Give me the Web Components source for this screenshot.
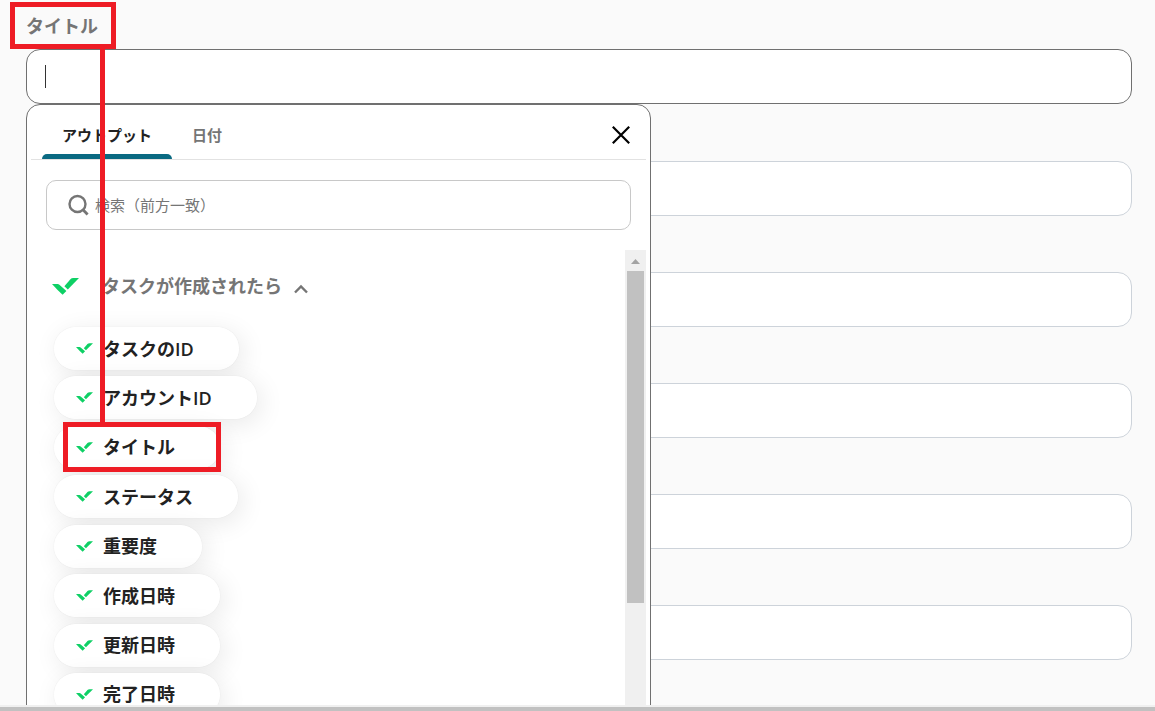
<!DOCTYPE html>
<html lang="ja">
<head>
<meta charset="utf-8">
<meta name="viewport" content="width=device-width, initial-scale=1">
<title>タスク設定</title>
<style>
html, body { margin: 0; height: 100%; }
body { font-family: "Open Sans", "Noto Sans CJK JP", sans-serif; color: #222; background: #fafafa; }
</style>
</head>
<body>
<task-form></task-form>
<script>
class Base extends HTMLElement {
  constructor() {
    super();
    const root = this.attachShadow({ mode: "open" });
    root.innerHTML = "<style>*{box-sizing:border-box}button,input{font:inherit;color:inherit;border:0;padding:0;margin:0;background:none;outline:0}</style>" + this.constructor.markup;
  }
}

/* Green two-part tick of the connected service */
class ServiceMark extends Base {
  static markup = `
  <style>
    :host { display: block; flex: none; width: 27px; height: 17px; }
    :host([small]) { width: 17px; height: 11px; }
    svg { display: block; width: 100%; height: 100%; }
  </style>
  <svg viewBox="0 0 27 17" fill="#0ed065" aria-hidden="true">
    <path d="M0 6H5.6Q6.6 6 7.4 6.8L14.4 13L10.6 16.8Q5.5 12.2 0 6Z"/>
    <path d="M12.4 8.2L18.2 1.4Q19.5 0 21.4 0H27L15.8 11.4Z"/>
  </svg>`;
}
customElements.define("service-mark", ServiceMark);

class OutputChip extends Base {
  static markup = `
  <style>
    :host { display: block; border-radius: 22px; box-shadow: 0 0 1px rgba(0,0,0,.15), 4px 5px 26px rgba(0,0,0,.09); }
    button { display: flex; align-items: center; gap: 10px; height: 43px; padding: 0 45px 0 22px;
      border-radius: 22px; background: #fff; font-size: 18px; font-weight: 600; line-height: 24px; white-space: nowrap; }
  </style>
  <button type="button"><service-mark small></service-mark><span><slot></slot></span></button>`;
}
customElements.define("output-chip", OutputChip);

class ScrollRail extends Base {
  static markup = `
  <style>
    :host { display: block; flex: none; width: 21px; background: #f0f0f0; }
    svg { display: block; width: 21px; height: 21px; }
    div { height: 332px; margin: 0 2px; background: #c1c1c1; }
  </style>
  <svg aria-hidden="true"><path d="M6 14L10.5 9L15 14Z" fill="#a3a3a3"/></svg><div></div>`;
}
customElements.define("scroll-rail", ScrollRail);

class OutputPicker extends Base {
  static markup = `
  <style>
    :host { display: block; background: #fff; border: 1px solid #707070; border-radius: 14px; padding: 0 4px; }
    header { display: flex; align-items: stretch; height: 55px; padding: 0 10px 0 11px; border-bottom: 1px solid #e2e2e2; }
    .tab { position: relative; height: 54px; padding: 5px 20px 0; font-size: 15px; font-weight: 700; line-height: 24px; color: #757575; }
    .tab[aria-selected="true"] { color: #222; width: 130px; }
    .tab[aria-selected="true"]::after { content: ""; position: absolute; left: 0; right: 0; bottom: 0; height: 5px; background: #0a6a82; border-radius: 5px 5px 0 0; }
    .close { margin-left: auto; align-self: center; width: 30px; height: 30px; display: grid; place-items: center; padding-top: 6px; }
    .search { display: flex; align-items: center; gap: 4px; height: 50px; margin: 20px 15px; padding: 0 20px; border: 1px solid #c8c8c8; border-radius: 10px; }
    .search svg { flex: none; }
    .search input { flex: 1; min-width: 0; height: 30px; font-size: 15px; line-height: 24px; }
    .search input::placeholder { color: #757575; opacity: 1; }
    .body { display: flex; align-items: stretch; }
    .list { flex: 1; min-width: 0; padding: 20px 21px; }
    .group { display: flex; align-items: center; height: 32px; font-size: 18px; font-weight: 600; line-height: 24px; color: #757575; white-space: nowrap; }
    .group span { margin: 0 11px 0 23px; }
    .group .chev { margin-top: 6px; }
    .chips { display: flex; flex-direction: column; align-items: flex-start; justify-content: space-between; min-height: 389px; margin-top: 25px; padding-left: 2px; }
  </style>
  <header role="tablist">
    <button class="tab" type="button" role="tab" aria-selected="true">アウトプット</button>
    <button class="tab" type="button" role="tab" aria-selected="false">日付</button>
    <button class="close" type="button" aria-label="閉じる">
      <svg width="18" height="18" fill="none" stroke="#000" stroke-width="2.2"><path d="M.8 .8L17.2 17.2M17.2 .8L.8 17.2"/></svg>
    </button>
  </header>
  <div class="search">
    <svg width="24" height="24" fill="none" stroke="#757575" stroke-width="2.4" aria-hidden="true"><circle cx="10.5" cy="11" r="8"/><path d="M16 16.8L20.6 21.4" stroke-width="2.8"/></svg>
    <input type="text" aria-label="検索" placeholder="検索（前方一致）">
  </div>
  <div class="body">
    <div class="list">
      <button class="group" type="button" aria-expanded="true">
        <service-mark></service-mark><span>タスクが作成されたら</span>
        <svg class="chev" width="16" height="10" fill="none" stroke="#757575" stroke-width="2.4" aria-hidden="true"><path d="M2 8.5L8 2.5L14 8.5"/></svg>
      </button>
      <div class="chips">
        <output-chip>タスクのID</output-chip>
        <output-chip>アカウントID</output-chip>
        <output-chip>タイトル</output-chip>
        <output-chip>ステータス</output-chip>
        <output-chip>重要度</output-chip>
        <output-chip>作成日時</output-chip>
        <output-chip>更新日時</output-chip>
        <output-chip>完了日時</output-chip>
      </div>
    </div>
    <scroll-rail></scroll-rail>
  </div>`;
}
customElements.define("output-picker", OutputPicker);

class FormField extends Base {
  static markup = `
  <style>
    :host { display: block; }
    .box { display: flex; align-items: center; height: 55px; padding: 0 18px; background: #fff; border: 1px solid #cdd3da; border-radius: 14px; }
    :host([active]) .box { border-color: #707070; }
    label { font-size: 18px; font-weight: 700; line-height: 24px; color: #757575; display: block; width: max-content; margin-bottom: 11px; }
    label[hidden] { display: none; }
    input { flex: 1; min-width: 0; height: 32px; font-size: 18px; }
    i { display: none; width: 1px; height: 23px; background: #333; }
    :host([active]) i { display: block; }
  </style>
  <label for="value" hidden></label>
  <div class="box"><i></i><input id="value" type="text"></div>`;
  connectedCallback() {
    const label = this.shadowRoot.querySelector("label");
    if (this.hasAttribute("label")) {
      label.textContent = this.getAttribute("label");
      label.hidden = false;
    } else {
      this.shadowRoot.querySelector("input").setAttribute("aria-label", this.getAttribute("name"));
    }
  }
}
customElements.define("form-field", FormField);

/* Red guide: frame round the label, connector, frame round the chip */
class GuideMarks extends Base {
  static markup = `
  <style>
    :host { display: block; position: absolute; inset: 0; z-index: 3; pointer-events: none; }
    div { position: absolute; border: 5px solid #ee1c25; }
    .from { left: 10px; top: 2px; width: 106px; height: 47px; }
    .line { left: 100px; top: 48px; height: 376px; border-width: 0 0 0 5px; }
    .to { left: 63px; top: 422px; width: 158px; height: 50px; }
  </style>
  <div class="from"></div><div class="line"></div><div class="to"></div>`;
}
customElements.define("guide-marks", GuideMarks);

class TaskForm extends Base {
  static markup = `
  <style>
    :host { display: flex; flex-direction: column; height: 100vh; overflow: hidden; }
    main { flex: 1; min-height: 0; position: relative; overflow: hidden; padding: 14px 23px 0 26px; }
    .anchor { position: relative; z-index: 2; }
    output-picker { position: absolute; top: 100%; left: 0; width: 625px; }
    .rest { display: grid; gap: 56px; margin-top: 57px; }
    footer { flex: none; height: 6px; background: #c1c1c1; border-top: 2px solid #f0f0f0; }
  </style>
  <main>
    <div class="anchor"><form-field active label="タイトル"></form-field><output-picker></output-picker></div>
    <div class="rest">
      <form-field name="ステータス"></form-field>
      <form-field name="重要度"></form-field>
      <form-field name="作成日時"></form-field>
      <form-field name="更新日時"></form-field>
      <form-field name="完了日時"></form-field>
    </div>
    <guide-marks></guide-marks>
  </main>
  <footer></footer>`;
}
customElements.define("task-form", TaskForm);
</script>
</body>
</html>
